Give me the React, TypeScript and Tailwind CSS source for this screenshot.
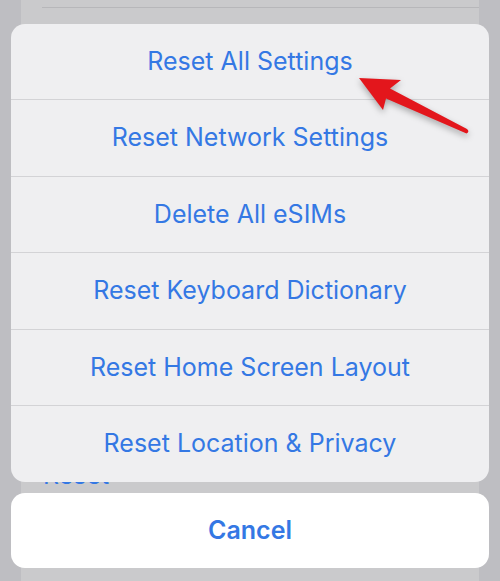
import React from 'react'

const actions = [
  'Reset All Settings',
  'Reset Network Settings',
  'Delete All eSIMs',
  'Reset Keyboard Dictionary',
  'Reset Home Screen Layout',
  'Reset Location & Privacy',
]

function Arrow() {
  return (
    <svg
      className="absolute left-0 top-0 pointer-events-none"
      width="500"
      height="581"
      viewBox="0 0 500 581"
      style={{ filter: 'drop-shadow(0px 3px 3px rgba(0,0,0,0.3))' }}
    >
      <path
        d="M359 78 L401 80 L390 88.5 L467 129 Q470 131.5 466.5 133.5 L386 98.5 L383 110 Z"
        fill="#e3161c"
      />
    </svg>
  )
}

export default function App() {
  return (
    <div
      className="relative w-[500px] h-[581px] overflow-hidden bg-[#bebec2]"
      style={{ fontFamily: 'Inter, "Noto Sans", sans-serif' }}
    >
      {/* dimmed page behind the sheet */}
      <div className="mx-[21px] h-full bg-[#cacacc] flex flex-col justify-between">
        <div className="ml-[21px] mt-[7px] h-px bg-[#b7b7ba]" />
        <div className="pl-[22px] pb-[93px] text-[25px] leading-none text-[#3478e4]">Reset</div>
      </div>

      {/* action sheet */}
      <div className="absolute left-[11px] right-[11px] top-[24px] flex flex-col gap-[11.5px]">
        <div className="rounded-[14px] bg-[#efeff1] overflow-hidden">
          {actions.map((label, i) => (
            <div
              key={label}
              className={
                'flex items-center justify-center text-[25px] text-[#3478e4] ' +
                (i === 0 ? 'h-[75px]' : 'h-[76.5px] border-t border-[#d3d3d6]')
              }
            >
              {label}
            </div>
          ))}
        </div>
        <div className="h-[75px] rounded-[14px] bg-white flex items-center justify-center text-[25px] font-semibold text-[#3478e4]">
          Cancel
        </div>
      </div>

      <Arrow />
    </div>
  )
}
